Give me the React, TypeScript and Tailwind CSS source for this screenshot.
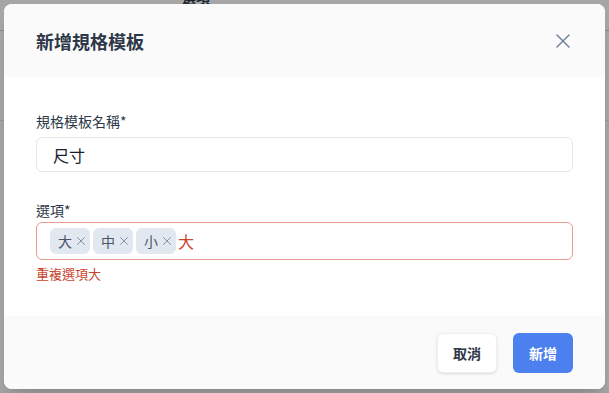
import { X } from "lucide-react";

const tags = ["大", "中", "小"];

const App = () => {
  return (
    <div
      className="relative h-[393px] w-[609px] overflow-hidden bg-white"
      style={{ fontFamily: '"Noto Sans CJK TC", "Noto Sans", sans-serif' }}
    >
      {/* page behind the dialog */}
      <div className="flex h-[31px] items-end border-b border-gray-300 pl-[182px] text-sm font-semibold text-[#2d3748]">
        <span className="-mb-px translate-y-[-24px]">選項</span>
      </div>
      <div className="h-[90px] border-b border-gray-200" />

      {/* overlay */}
      <div className="absolute inset-0 flex bg-black/35 p-1">
        <div className="flex w-full flex-col overflow-hidden rounded-lg bg-white shadow-xl">
          <div className="flex h-[73px] items-center justify-between bg-[#fafafa] px-8">
            <h2 className="text-lg font-bold text-[#2d3748]">新增規格模板</h2>
            <X className="-mr-[2px] h-6 w-6 text-[#718096]" strokeWidth={1.5} />
          </div>

          <div className="flex h-[239px] flex-col px-8 pt-[34px]">
            <label className="text-sm leading-5 text-[#2d3748]">規格模板名稱*</label>
            <div className="mt-[6px] flex h-[35px] items-center rounded-md border border-[#e2e8f0] pl-4 text-base text-[#1a202c]">
              尺寸
            </div>

            <label className="mt-7 text-sm leading-5 text-[#2d3748]">選項*</label>
            <div className="mt-[2px] flex h-[38px] items-center gap-[3px] rounded-md border border-[#e89b90] pl-[13px]">
              {tags.map((t) => (
                <span
                  key={t}
                  className="flex h-[26px] items-center rounded-md bg-[#e2e8f0] pl-2 pr-[2px] text-sm text-[#4a5568]"
                >
                  {t}
                  <X className="ml-[2px] h-[14px] w-[14px] text-[#718096]" strokeWidth={1.4} />
                </span>
              ))}
              <span className="-ml-[1px] text-base text-[#c9452f]">大</span>
            </div>
            <p className="mt-1 text-[13px] leading-5 text-[#c9452f]">重複選項大</p>
          </div>

          <div className="flex flex-1 items-center justify-end gap-4 bg-[#fafafa] px-8">
            <button className="h-10 w-[60px] rounded-md border border-[#eef0f3] bg-white text-sm font-bold text-[#2d3748] shadow-sm">
              取消
            </button>
            <button className="h-10 w-[60px] rounded-md bg-[#4b80ee] text-sm font-bold text-white">
              新增
            </button>
          </div>
        </div>
      </div>
    </div>
  );
};

export default App;
